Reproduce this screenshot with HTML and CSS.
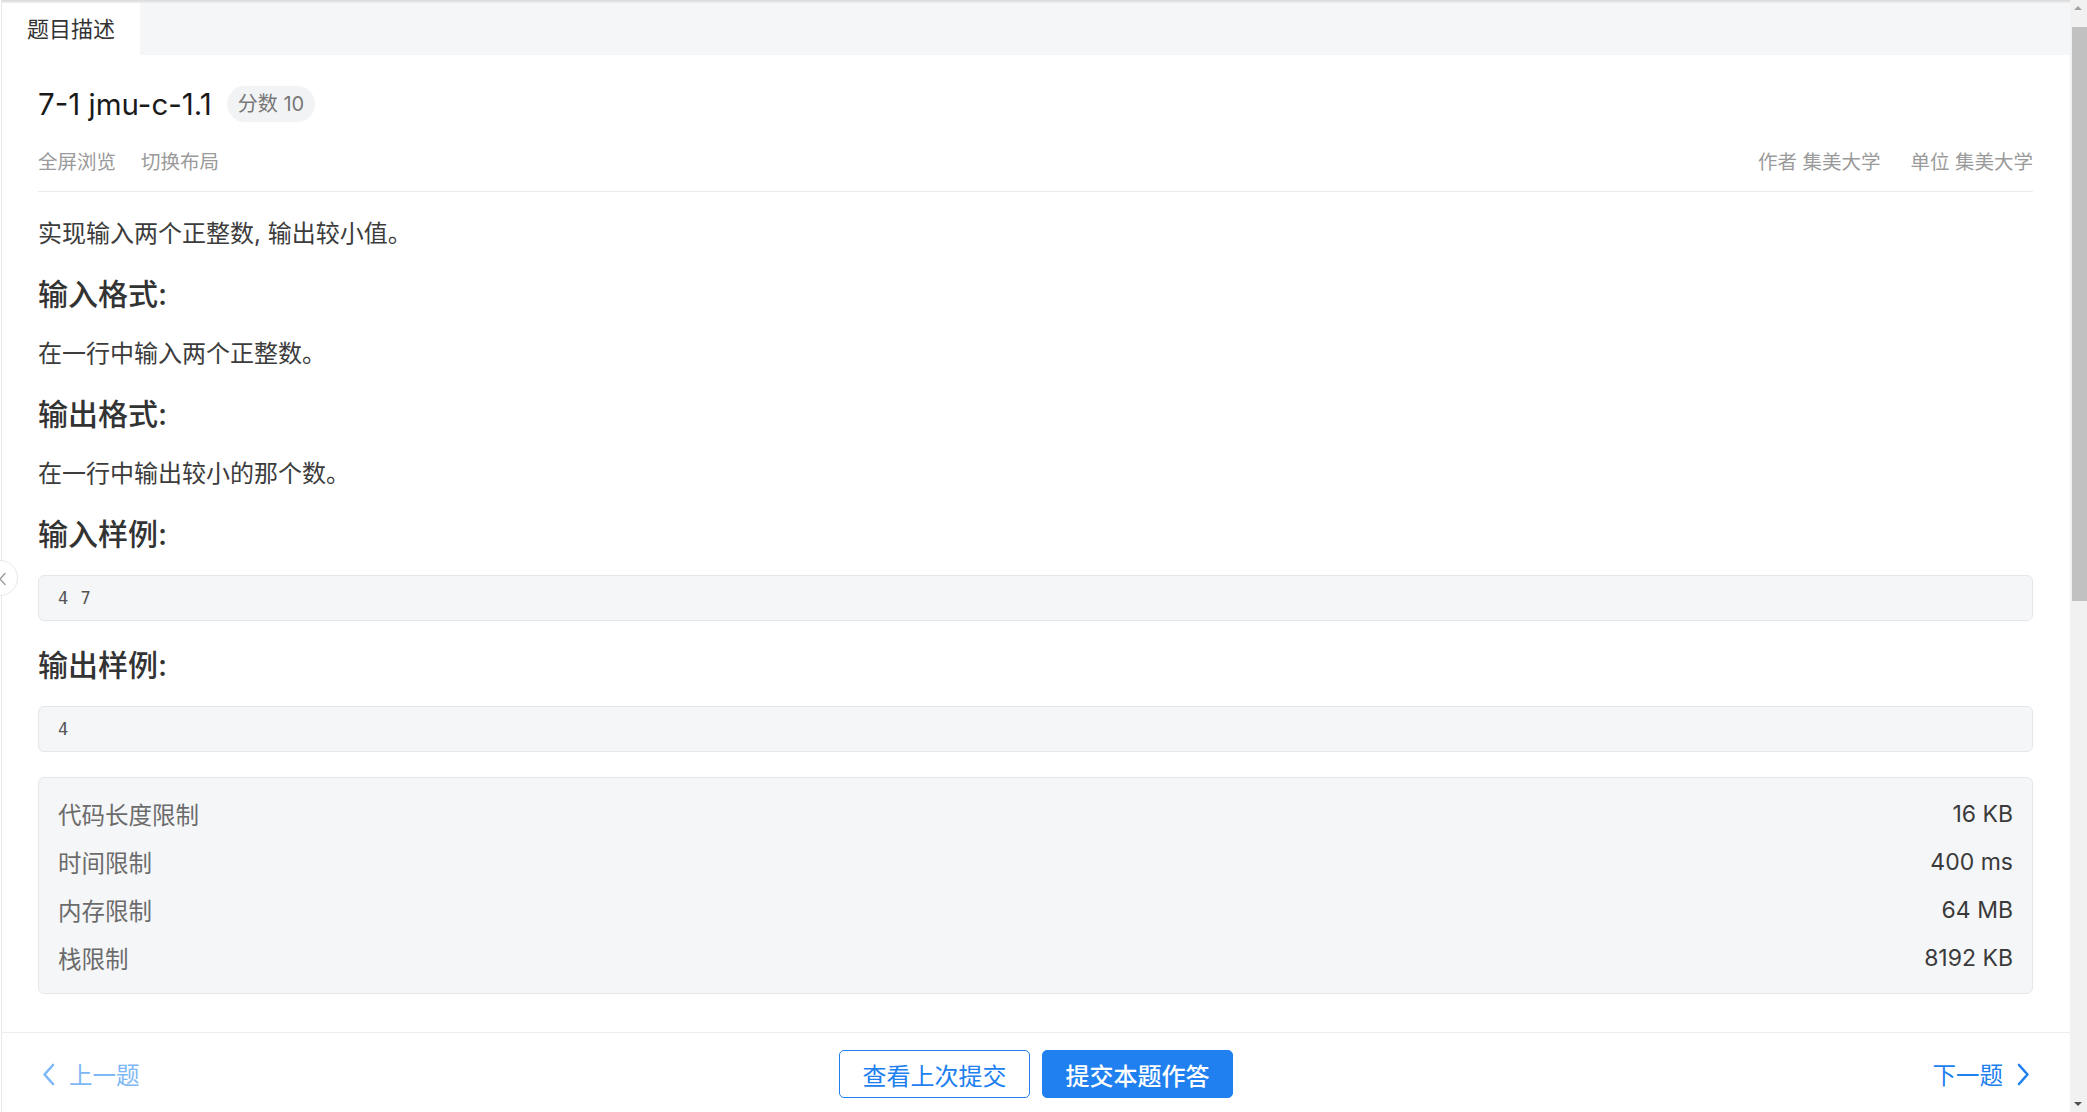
FILE: index.html
```html
<!DOCTYPE html>
<html lang="zh-CN">
<head>
<meta charset="utf-8">
<title>题目描述</title>
<link rel="stylesheet" href="styles.css">
</head>
<body>
<div class="app">
  <div class="main">
    <div class="topshade"></div>
    <div class="tabs"><div class="tab">题目描述</div></div>
    <div class="content">
      <div class="title-row">
        <h1 class="title">7-1 jmu-c-1.1</h1>
        <span class="badge">分数 10</span>
      </div>
      <div class="meta-row">
        <div class="meta-group gap-left"><span>全屏浏览</span><span>切换布局</span></div>
        <div class="meta-group gap-right"><span>作者 集美大学</span><span>单位 集美大学</span></div>
      </div>
      <div class="desc">
        <p class="para first">实现输入两个正整数, 输出较小值。</p>
        <h3 class="heading">输入格式:</h3>
        <p class="para">在一行中输入两个正整数。</p>
        <h3 class="heading">输出格式:</h3>
        <p class="para">在一行中输出较小的那个数。</p>
        <h3 class="heading">输入样例:</h3>
        <pre class="code">4 7</pre>
        <h3 class="heading heading-after-code">输出样例:</h3>
        <pre class="code">4</pre>
      </div>
      <div class="limits">
        <div class="limit-row"><span class="limit-label">代码长度限制</span><span class="limit-value">16 KB</span></div>
        <div class="limit-row"><span class="limit-label">时间限制</span><span class="limit-value">400 ms</span></div>
        <div class="limit-row"><span class="limit-label">内存限制</span><span class="limit-value">64 MB</span></div>
        <div class="limit-row"><span class="limit-label">栈限制</span><span class="limit-value">8192 KB</span></div>
      </div>
    </div>
    <div class="footer">
      <div class="nav nav-prev">
        <svg class="chev" width="13" height="23" viewBox="0 0 13 23"><path d="M11 2 L2.5 11.5 L11 21" fill="none" stroke="currentColor" stroke-width="2.6" stroke-linecap="round" stroke-linejoin="round"/></svg>
        <span>上一题</span>
      </div>
      <div class="actions">
        <button class="btn btn-outline">查看上次提交</button>
        <button class="btn btn-primary">提交本题作答</button>
      </div>
      <div class="nav nav-next">
        <span>下一题</span>
        <svg class="chev" width="13" height="23" viewBox="0 0 13 23"><path d="M2 2 L10.5 11.5 L2 21" fill="none" stroke="currentColor" stroke-width="2.6" stroke-linecap="round" stroke-linejoin="round"/></svg>
      </div>
    </div>
  </div>
  <div class="scrollbar">
    <div class="sb-arrow up"></div>
    <div class="sb-thumb"></div>
    <div class="sb-fill"></div>
    <div class="sb-arrow down"></div>
  </div>
  <div class="collapse">
    <svg class="collapse-icon" width="8" height="14" viewBox="0 0 8 14"><path d="M6 1.5 L1 7 L6 12.5" fill="none" stroke="#9a9a9a" stroke-width="1.3" stroke-linecap="round" stroke-linejoin="round"/></svg>
  </div>
</div>
</body>
</html>
```

FILE: styles.css
```css
* { box-sizing: border-box; }
html, body { margin: 0; padding: 0; }
body {
  width: 2087px;
  height: 1112px;
  overflow: hidden;
  background: #fff;
  font-family: "Inter", "Noto Sans CJK SC", sans-serif;
  color: #333;
}
.app {
  position: relative;
  display: flex;
  height: 1112px;
  width: 2087px;
  overflow: hidden;
}
.main {
  flex: 1;
  display: flex;
  flex-direction: column;
  margin-left: 1px;
  border-left: 1px solid #e9e9e9;
  min-width: 0;
}
.topshade {
  height: 3px;
  background: linear-gradient(#d9d9d9, #f0f0f0);
  flex: none;
}
.tabs {
  height: 52px;
  flex: none;
  background: #f5f6f8;
  display: flex;
}
.tab {
  background: #fff;
  padding: 0 25px;
  font-size: 22px;
  line-height: 52px;
  color: #333;
  width: 138px;
  text-align: center;
  white-space: nowrap;
}
.content {
  flex: 1;
  overflow: hidden;
  padding: 31px 37px 0 36px;
}
.title-row {
  display: flex;
  align-items: center;
  gap: 15px;
  height: 36px;
}
.title {
  margin: 0;
  font-size: 29.5px;
  font-weight: 400;
  color: #1a1a1a;
  line-height: 36px;
}
.badge {
  height: 36px;
  line-height: 36px;
  padding: 0 11px;
  border-radius: 18px;
  background: #f2f3f5;
  color: #777;
  font-size: 20px;
}
.meta-row {
  margin-top: 26px;
  display: flex;
  justify-content: space-between;
  align-items: center;
  height: 28px;
  line-height: 28px;
  font-size: 19.5px;
  color: #9a9a9a;
  box-sizing: content-box;
  padding-bottom: 15px;
  border-bottom: 1px solid #ebebeb;
}
.meta-group { display: flex; }
.gap-left { gap: 25px; }
.gap-right { gap: 30px; }
.desc { display: flex; flex-direction: column; }
.para {
  margin: 23px 0 0;
  font-size: 24px;
  line-height: 34px;
  color: #3c3c3c;
}
.para.first { margin-top: 25px; }
.heading {
  margin: 23px 0 0;
  font-size: 30px;
  line-height: 40px;
  font-weight: 500;
  color: #333;
}
.heading-after-code { margin-top: 24px; }
.code {
  margin: 21px 0 0;
  height: 46px;
  display: flex;
  align-items: center;
  padding: 0 19px;
  background: #f5f6f8;
  border: 1px solid #e6e7ea;
  border-radius: 6px;
  font-family: "DejaVu Sans Mono", monospace;
  font-size: 17px;
  letter-spacing: 1px;
  color: #555;
}
.limits {
  margin-top: 25px;
  padding: 12px 19px 11px;
  background: #f5f6f8;
  border: 1px solid #e6e7ea;
  border-radius: 6px;
}
.limit-row {
  height: 48px;
  display: flex;
  justify-content: space-between;
  align-items: center;
  font-size: 23.5px;
}
.limit-label { color: #6b6b6b; }
.limit-value { color: #3a3a3a; font-size: 23px; }
.footer {
  flex: none;
  height: 80px;
  border-top: 1px solid #ececec;
  padding: 17px 40px 14px 40px;
  display: grid;
  grid-template-columns: 1fr auto 1fr;
  align-items: center;
}
.nav {
  display: flex;
  align-items: center;
  gap: 14px;
  font-size: 23.5px;
}
.nav-prev { color: #7db7f6; justify-self: start; }
.nav-next { color: #2080f0; justify-self: end; }
.chev { display: block; }
.actions {
  display: flex;
  gap: 12px;
}
.btn {
  width: 191px;
  height: 48px;
  border-radius: 5px;
  font-family: "Inter", "Noto Sans CJK SC", sans-serif;
  font-size: 24px;
  padding: 0;
  cursor: pointer;
}
.btn-outline {
  background: #fff;
  color: #2080f0;
  border: 1px solid #2080f0;
}
.btn-primary {
  background: #2080f0;
  color: #fff;
  border: 1px solid #2080f0;
  font-weight: 500;
}
.scrollbar {
  width: 17px;
  flex: none;
  background: #f1f1f1;
  display: flex;
  flex-direction: column;
}
.sb-arrow {
  height: 17px;
  flex: none;
  position: relative;
}
.sb-arrow.up::after, .sb-arrow.down::after {
  content: "";
  position: absolute;
  left: 4px;
  width: 0;
  height: 0;
  border-left: 4px solid transparent;
  border-right: 4px solid transparent;
}
.sb-arrow.up::after { top: 6px; border-bottom: 4px solid #a3a3a3; }
.sb-arrow.down::after { top: 7px; border-top: 4px solid #505050; }
.sb-thumb {
  height: 574px;
  margin: 10px 0 0 2px;
  background: #c1c1c1;
  flex: none;
}
.sb-fill { flex: 1; }
.collapse {
  position: absolute;
  left: -18px;
  top: 560px;
  width: 36px;
  height: 36px;
  border-radius: 50%;
  background: #fff;
  border: 1px solid #e8e8e8;
}
.collapse-icon {
  position: absolute;
  left: 16px;
  top: 11px;
}
```
